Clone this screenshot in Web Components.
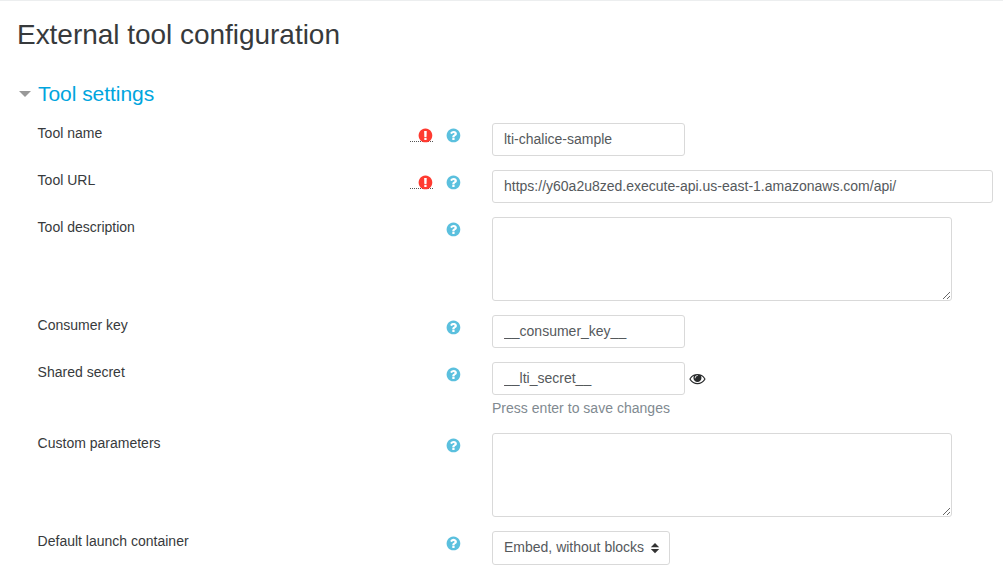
<!DOCTYPE html>
<html lang="en">
<head>
<meta charset="utf-8">
<title>External tool configuration</title>
<style>
body{margin:0;background:#fff;font:14px/21px "Liberation Sans",Arial,sans-serif;color:#373a3c;overflow:hidden}
</style>
</head>
<body>
<tool-page heading="External tool configuration">
  <form-section legend="Tool settings">
    <form-row label="Tool name" required><text-field value="lti-chalice-sample"></text-field></form-row>
    <form-row label="Tool URL" required><text-field value="https://y60a2u8zed.execute-api.us-east-1.amazonaws.com/api/" style="--w:501px"></text-field></form-row>
    <form-row label="Tool description"><text-area></text-area></form-row>
    <form-row label="Consumer key"><text-field value="__consumer_key__"></text-field></form-row>
    <form-row label="Shared secret"><secret-field value="__lti_secret__" hint="Press enter to save changes"></secret-field></form-row>
    <form-row label="Custom parameters"><text-area></text-area></form-row>
    <form-row label="Default launch container"><select-field value="Embed, without blocks"></select-field></form-row>
  </form-section>
</tool-page>
<script>
const define = (name, render) => customElements.define(name, class extends HTMLElement {
  constructor() { super(); this.attachShadow({mode: 'open'}); }
  connectedCallback() { this.shadowRoot.innerHTML = render(this); }
});

const ICONS = {
  question: 'M1024 1376v-192q0-14-9-23t-23-9h-192q-14 0-23 9t-9 23v192q0 14 9 23t23 9h192q14 0 23-9t9-23zm256-672q0-88-55.5-163t-138.5-116-170-41q-243 0-371 213-15 24 8 42l132 100q7 6 19 6 16 0 25-12 53-68 86-92 34-24 86-24 48 0 85.5 26t37.5 59q0 38-20 61t-68 45q-63 28-115.5 86.5t-52.5 125.5v36q0 14 9 23t23 9h192q14 0 23-9t9-23q0-19 21.5-49.5t54.5-49.5q32-18 49-28.5t46-35 44.5-48 28-60.5 12.5-81zm384 192q0 209-103 385.5t-279.5 279.5-385.5 103-385.5-103-279.5-279.5-103-385.5 103-385.5 279.5-279.5 385.5-103 385.5 103 279.5 279.5 103 385.5z',
  exclamation: 'M896 128q209 0 385.5 103t279.5 279.5 103 385.5-103 385.5-279.5 279.5-385.5 103-385.5-103-279.5-279.5-103-385.5 103-385.5 279.5-279.5 385.5-103zm128 1247v-190q0-14-9-23.5t-22-9.5h-192q-13 0-23 10t-10 23v190q0 13 10 23t23 10h192q13 0 22-9.5t9-23.5zm-2-344l18-621q0-12-10-18-10-8-24-8h-220q-14 0-24 8-10 6-10 18l17 621q0 10 10 17.5t24 7.5h185q14 0 23.5-7.5t10.5-17.5z',
  eye: 'M1664 960q-152-236-381-353 61 104 61 225 0 185-131.5 316.5t-316.5 131.5-316.5-131.5-131.5-316.5q0-121 61-225-229 117-381 353 133 205 333.5 326.5t434.5 121.5 434.5-121.5 333.5-326.5zm-720-384q0-20-14-34t-34-14q-125 0-214.5 89.5t-89.5 214.5q0 20 14 34t34 14 34-14 14-34q0-86 61-147t147-61q20 0 34-14t14-34zm848 384q0 34-20 69-140 230-376.5 368.5t-499.5 138.5-499.5-139-376.5-368q-20-35-20-69t20-69q140-229 376.5-368t499.5-139 499.5 139 376.5 368q20 35 20 69z'
};

define('fa-icon', el => `
  <style>:host{display:block;width:16px;height:16px}svg{display:block;width:16px;height:16px;fill:currentColor;overflow:visible}</style>
  <svg viewBox="-50 -50 1792 1792"><path d="${ICONS[el.getAttribute('name')]}"/></svg>`);

define('tool-page', el => `
  <style>
    :host{display:block;box-sizing:border-box;border-top:1px solid #eceeef;padding:17px 10px 0 17px}
    h2{margin:0;font-size:28px;line-height:33px;font-weight:400;letter-spacing:-.03px}
  </style>
  <h2>${el.getAttribute('heading')}</h2><slot></slot>`);

define('form-section', el => `
  <style>
    :host{display:block;padding:30px 0 0}
    header{display:flex;align-items:center;gap:7px;height:26px;margin-bottom:16px;padding-left:2px}
    h3{margin:0;font-size:21px;line-height:26px;font-weight:400;letter-spacing:-.04px;color:#00a5de}
    svg{display:block}
    .rows{display:flex;flex-direction:column;gap:14px;padding-left:21px}
  </style>
  <header><svg width="12" height="6" viewBox="0 0 12 6"><path d="M0 0h12L6 6z" fill="#999"/></svg><h3>${el.getAttribute('legend')}</h3></header>
  <div class="rows"><slot></slot></div>`);

define('form-row', el => `
  <style>
    :host{display:grid;grid-template-columns:372px 82px auto;align-items:start}
    .label{line-height:21px;margin-left:-.4px}
    .marks{display:flex;gap:12px;justify-content:flex-end;padding:4px 31px 0 0}
    .req{display:flex;box-sizing:border-box;justify-content:flex-end;width:23px;height:15px;border-bottom:1px dotted #555;color:#ff3a30}
    .help{color:#5bc0de}
  </style>
  <span class="label">${el.getAttribute('label')}</span>
  <span class="marks">${el.hasAttribute('required') ? '<span class="req"><fa-icon name="exclamation"></fa-icon></span>' : ''}<fa-icon class="help" name="question"></fa-icon></span>
  <slot></slot>`);

define('text-field', el => `
  <style>
    :host{display:block}
    input{display:block;box-sizing:border-box;width:var(--w,193px);height:33px;margin:0;padding:0 11px 2px;border:1px solid #d9d9d9;border-radius:3px;background:#fff;font:inherit;color:#55595c;outline:0}
  </style>
  <input type="text" value="${el.getAttribute('value')}">`);

define('text-area', () => `
  <style>
    :host{display:block}
    textarea{display:block;box-sizing:border-box;width:460px;height:84px;margin:0;padding:5px 11px;border:1px solid #d9d9d9;border-radius:3px;background:#fff;font:inherit;color:#55595c;outline:0}
  </style>
  <textarea></textarea>`);

define('secret-field', el => `
  <style>
    :host{display:block;height:57px}
    div{display:flex;align-items:flex-start;gap:4px}
    p{margin:3px 0 0;line-height:21px;color:#818a91;letter-spacing:.02px}
    fa-icon{color:#292b2c;margin-top:8px}
  </style>
  <div><text-field value="${el.getAttribute('value')}"></text-field><fa-icon name="eye"></fa-icon></div>
  <p>${el.getAttribute('hint')}</p>`);

define('select-field', el => `
  <style>
    :host{display:flex;box-sizing:border-box;width:178px;height:34px;align-items:center;justify-content:space-between;padding:0 10px 1px 11px;border:1px solid #d9d9d9;border-radius:3px;color:#55595c}
    svg{display:block;overflow:visible}
  </style>
  <span>${el.getAttribute('value')}</span>
  <svg width="8" height="10" viewBox="0 0 8 10" fill="#333"><path d="M-.2 4.3L4 0l4.2 4.3zM-.2 6h8.4L4 10.3z"/></svg>`);
</script>
</body>
</html>
